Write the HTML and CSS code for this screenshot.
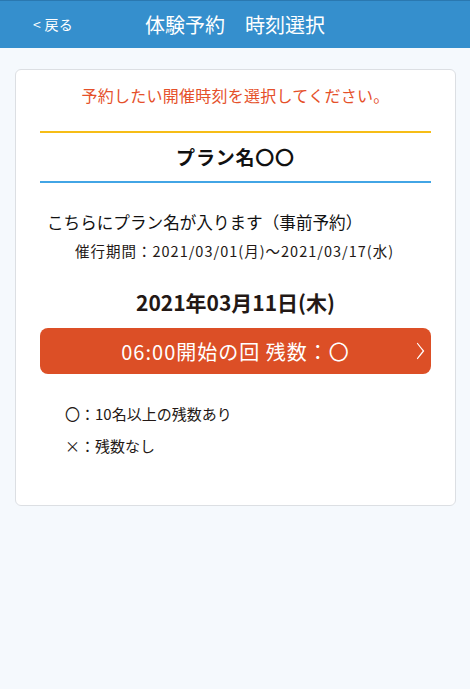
FILE: index.html
```html
<!DOCTYPE html>
<html lang="ja">
<head>
  <meta charset="UTF-8" />
  <title>体験予約 時刻選択</title>
  <link rel="stylesheet" href="styles.css">
</head>
<body>
  <header class="header">
    <a class="back" href="#">&lt; 戻る</a>
    <h1 class="title">体験予約　時刻選択</h1>
  </header>

  <main class="page">
    <div class="card">
      <p class="notice">予約したい開催時刻を選択してください。</p>
      <h2 class="plan-name">プラン名〇〇</h2>
      <p class="plan-desc">こちらにプラン名が入ります（事前予約）</p>
      <p class="plan-period">催行期間：2021/03/01(月)〜2021/03/17(水)</p>

      <h3 class="date">2021年03月11日(木)</h3>
      <button type="button" class="slot">
        06:00開始の回 残数：〇
        <svg class="chevron" width="9" height="18" viewBox="0 0 9 18">
          <path d="M1.5 1.5 Q5 6 7.5 9 Q5 12 1.5 16.5" fill="none" stroke="#fff" stroke-width="1.2" stroke-linecap="round"/>
        </svg>
      </button>

      <ul class="legend">
        <li>〇：10名以上の残数あり</li>
        <li>×：残数なし</li>
      </ul>
    </div>
  </main>
</body>
</html>
```

FILE: styles.css
```css
body {
  margin: 0;
  font-family: "Noto Sans CJK JP", "Noto Sans", sans-serif;
  background: #f5f9fd;
  color: #231815;
}
.header {
  height: 48px;
  background: #358fcd;
  border-top: 1px solid #2a78b0;
  box-sizing: border-box;
  display: flex;
  align-items: center;
  justify-content: center;
  position: relative;
}
.back {
  position: absolute;
  left: 33px;
  top: 13px;
  color: #fff;
  text-decoration: none;
  font-size: 14px;
  letter-spacing: 0.3px;
}
.title {
  margin: 0;
  color: #fff;
  font-size: 20px;
  font-weight: normal;
  line-height: 1;
}
.page {
  padding: 21px 14px 0 15px;
}
.card {
  background: #fff;
  border: 1px solid #dcdfe3;
  border-radius: 6px;
  padding: 13px 24px 46px;
  box-sizing: border-box;
  height: 437px;
}
.notice {
  margin: 0;
  text-align: center;
  color: #e5502a;
  font-size: 16px;
  letter-spacing: 0.25px;
  line-height: 24px;
}
.plan-name {
  margin: 24px 0 0;
  border-top: 2px solid #f6bd16;
  border-bottom: 2px solid #42a5e5;
  text-align: center;
  font-size: 19px;
  letter-spacing: 0.8px;
  font-weight: bold;
  line-height: 48px;
  color: #111;
}
.plan-desc {
  margin: 26px 0 0 7px;
  font-size: 16.6px;
  line-height: 26px;
  color: #111;
}
.plan-period {
  margin: 6px 0 0 35px;
  font-size: 14.5px;
  letter-spacing: 1px;
  line-height: 20px;
}
.date {
  margin: 28px 0 0;
  text-align: center;
  font-size: 21px;
  line-height: 26px;
}
.slot {
  margin-top: 13px;
  width: 100%;
  height: 46px;
  border: none;
  border-radius: 8px;
  background: #dc4f26;
  color: #fff;
  font-family: inherit;
  font-size: 20px;
  letter-spacing: 1px;
  position: relative;
  padding: 0;
}
.chevron {
  position: absolute;
  right: 6px;
  top: 14px;
}
.legend {
  list-style: none;
  margin: 30px 0 0 25px;
  padding: 0;
  font-size: 15px;
  line-height: 20px;
}
.legend li + li {
  margin-top: 12px;
}
```
